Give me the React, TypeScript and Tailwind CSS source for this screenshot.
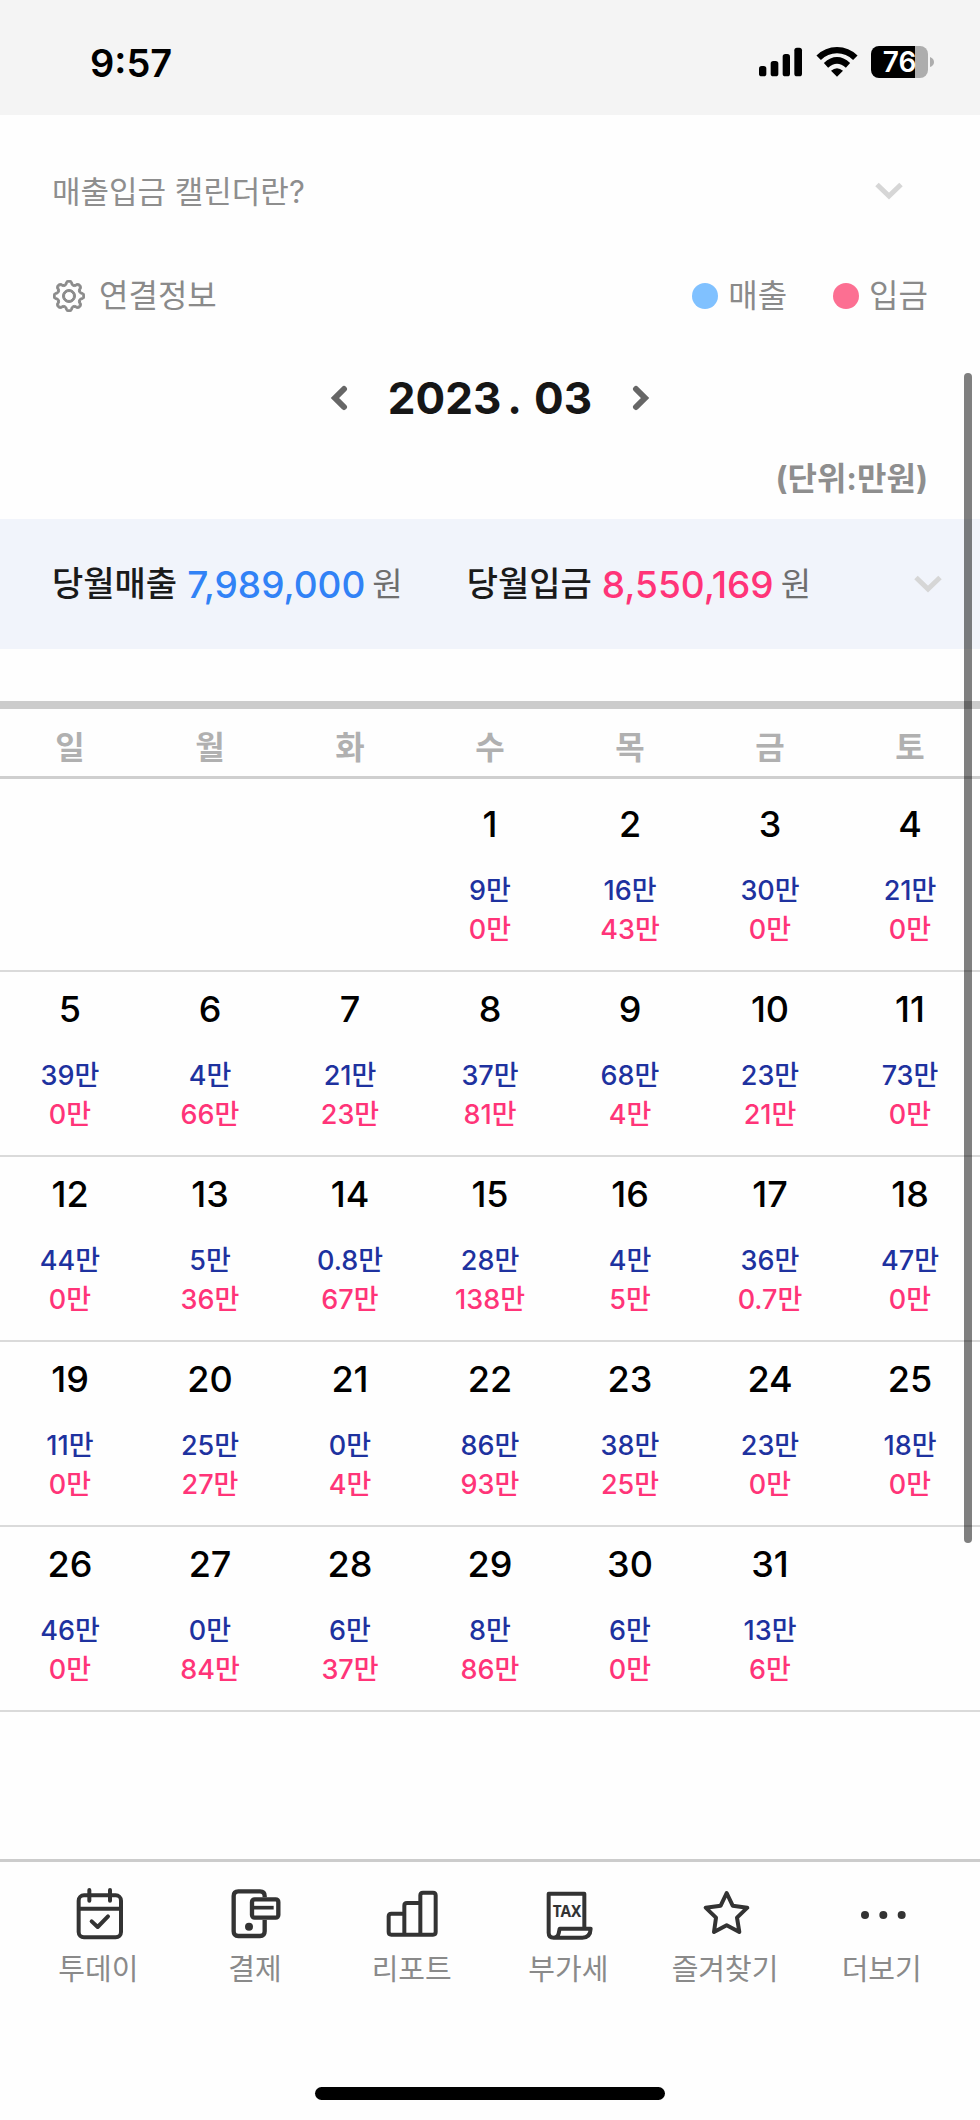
import { BsGear } from "react-icons/bs";

type Amounts = [day: number, sales: string, deposit: string];

const weekdays = ["일", "월", "화", "수", "목", "금", "토"];

const weeks: (Amounts | null)[][] = [
  [null, null, null, [1, "9", "0"], [2, "16", "43"], [3, "30", "0"], [4, "21", "0"]],
  [[5, "39", "0"], [6, "4", "66"], [7, "21", "23"], [8, "37", "81"], [9, "68", "4"], [10, "23", "21"], [11, "73", "0"]],
  [[12, "44", "0"], [13, "5", "36"], [14, "0.8", "67"], [15, "28", "138"], [16, "4", "5"], [17, "36", "0.7"], [18, "47", "0"]],
  [[19, "11", "0"], [20, "25", "27"], [21, "0", "4"], [22, "86", "93"], [23, "38", "25"], [24, "23", "0"], [25, "18", "0"]],
  [[26, "46", "0"], [27, "0", "84"], [28, "6", "37"], [29, "8", "86"], [30, "6", "0"], [31, "13", "6"], null],
];

function ChevronDown() {
  return (
    <svg width="28" height="18" viewBox="0 0 28 18" fill="none" stroke="#d6d6d6" strokeWidth="5" aria-hidden="true">
      <path d="M2 2.500 14 14 26 2.500" />
    </svg>
  );
}

function StatusBar() {
  return (
    <header className="flex h-[115px] items-center justify-between bg-[#f4f4f4] pt-2 pr-[46px] pl-[90px]">
      <time className="pt-[2px] text-[38px] font-semibold leading-none text-black">9:57</time>
      <div className="flex items-center gap-[13px]">
        <svg width="44" height="30" viewBox="809 141 132 90" aria-label="신호 세기" role="img">
          <rect x="809" y="198" width="22" height="31" rx="8" />
          <rect x="844" y="183" width="23" height="46" rx="8" />
          <rect x="880" y="162" width="22" height="67" rx="8" />
          <rect x="915" y="143" width="23" height="86" rx="8" />
        </svg>
        <svg width="42" height="30" viewBox="977 139 126 90" aria-label="와이파이" role="img">
          <path d="M1040 228 1022 210Q1040 195 1058 210Z" />
          <g fill="none" stroke="#000" strokeWidth="19">
            <path d="M985 171.500Q1008 148.500 1040 148.500T1095 171.500" />
            <path d="M1007 194Q1040 164 1073 194" />
          </g>
        </svg>
        <div className="flex items-center gap-[2px]">
          <div className="flex h-8 w-[57px] items-center justify-center rounded-lg bg-linear-to-r from-black from-77% to-[#adadad] to-77% text-[28px] font-semibold leading-none text-white">
            76
          </div>
          <svg width="4" height="10" viewBox="0 0 4 10" fill="#adadad" aria-hidden="true">
            <path d="M0 0Q4 1.500 4 5T0 10Z" />
          </svg>
        </div>
      </div>
    </header>
  );
}

function Total({ label, value, color }: { label: string; value: string; color: string }) {
  return (
    <div className="flex items-center">
      <span className="text-[34px] font-medium text-[#1a1a1a]">{label}</span>
      <span className={`ml-[10px] text-[37px] font-medium ${color}`}>{value}</span>
      <span className="ml-[7px] text-[33px] text-[#6e6e6e]">원</span>
    </div>
  );
}

const tabs = [
  {
    label: "투데이",
    icon: (
      <svg width="52" height="52" viewBox="212 144 156 156" fill="none" stroke="#333" strokeWidth="12" strokeLinecap="round" strokeLinejoin="round">
        <rect x="232" y="166" width="127" height="126" rx="16" />
        <path d="M264 150v32M326 150v32M234 206h124M271 244l18 17 31-32" />
      </svg>
    ),
  },
  {
    label: "결제",
    icon: (
      <svg width="52" height="52" viewBox="685 144 156 156" fill="none" stroke="#333" strokeWidth="13">
        <path d="M792 172v-4q0-14-14-14h-65q-14 0-14 14v106q0 14 14 14h65q14 0 14-14v-34" />
        <rect x="754" y="178" width="79" height="55" rx="8" />
        <path d="M758 203h61" strokeWidth="11" />
        <circle cx="745" cy="260" r="12" fill="#333" stroke="none" />
      </svg>
    ),
  },
  {
    label: "리포트",
    icon: (
      <svg width="52" height="52" viewBox="1157 144 156 156" fill="none" stroke="#333" strokeWidth="12" strokeLinejoin="round">
        <path d="M1212 221h-39q-8 0-8 8v47q0 8 8 8h125q8 0 8-8v-110q0-8-8-8h-30q-8 0-8 8v118M1260 189h-40q-8 0-8 8v87" />
      </svg>
    ),
  },
  {
    label: "부가세",
    icon: (
      <svg width="52" height="52" viewBox="154 144 156 156" fill="none" stroke="#333" strokeWidth="12" strokeLinejoin="round">
        <path d="M281 264V161H174v117q0 15 15 15h86q24 0 25-27h-93l-3 14q-3 13-16 13" />
        <text x="229" y="231" textAnchor="middle" fontFamily="Noto Sans, sans-serif" fontSize="46" fontWeight="700" fill="#333" stroke="none">TAX</text>
      </svg>
    ),
  },
  {
    label: "즐겨찾기",
    icon: (
      <svg width="52" height="52" viewBox="624 144 156 156" fill="none" stroke="#333" strokeWidth="12" strokeLinejoin="round">
        <path d="M707 159 725 197 769 203 738 233 745 276 707 256 669 276 675 233 644 203 689 197Z" />
      </svg>
    ),
  },
  {
    label: "더보기",
    icon: (
      <svg width="52" height="52" viewBox="1095 144 156 156" fill="#333">
        <circle cx="1122" cy="225" r="12" />
        <circle cx="1177" cy="225" r="12" />
        <circle cx="1232" cy="225" r="12" />
      </svg>
    ),
  },
];

export default function App() {
  return (
    <div className="relative flex min-h-screen flex-col bg-[#fefefe] font-['Inter','Noto_Sans_CJK_KR',sans-serif]">
      <StatusBar />

      <main className="flex-1">
        <button type="button" className="mt-12 flex h-14 w-full items-center justify-between pl-[52px] pr-[77px] text-[31px] leading-none text-[#8e8e8e]">
          매출입금 캘린더란?
          <ChevronDown />
        </button>

        <div className="mt-[49px] flex h-14 items-center justify-between pl-[53px] pr-[52px] text-[32px] leading-none text-[#8a8a8a]">
          <button type="button" className="flex items-center gap-[14px]">
            <BsGear className="size-8 stroke-[#8a8a8a] [stroke-width:0.5]" aria-hidden="true" />
            연결정보
          </button>
          <ul className="flex items-center gap-[46px]">
            <li className="flex items-center gap-[10px]">
              <span className="size-[26px] rounded-full bg-[#80c1ff]" />
              매출
            </li>
            <li className="flex items-center gap-[10px]">
              <span className="size-[26px] rounded-full bg-[#fc6f92]" />
              입금
            </li>
          </ul>
        </div>

        <div className="mt-[46px] flex h-14 items-center justify-center gap-10">
          <button type="button" aria-label="이전 달">
            <svg width="18" height="28" viewBox="0 0 18 28" fill="none" stroke="#666" strokeWidth="6" strokeLinecap="round">
              <path d="M14 5 5 14 14 23" />
            </svg>
          </button>
          <h1 className="flex text-[44px] font-bold leading-none text-[#161616]">
            <span>2023</span>
            <span className="mr-3 ml-[6px]">.</span>
            <span>03</span>
          </h1>
          <button type="button" aria-label="다음 달">
            <svg width="18" height="28" viewBox="0 0 18 28" fill="none" stroke="#666" strokeWidth="6" strokeLinecap="round">
              <path d="M4 5 13 14 4 23" />
            </svg>
          </button>
        </div>

        <p className="mt-[29px] flex h-12 items-center justify-end pr-[52px] text-[32px] font-bold leading-none text-[#8e8e8e]">(단위:만원)</p>

        <section className="mt-4 flex h-[130px] items-center justify-between bg-[#f1f4fb] pl-[52px] pr-[38px] leading-none">
          <div className="flex items-center gap-16">
            <Total label="당월매출" value="7,989,000" color="text-[#3182f6]" />
            <Total label="당월입금" value="8,550,169" color="text-[#ff3478]" />
          </div>
          <button type="button" aria-label="합계 펼치기">
            <ChevronDown />
          </button>
        </section>

        <table className="mt-[52px] w-full table-fixed border-collapse border-t-8 border-[#cccccc] text-center">
          <thead>
            <tr className="h-[72px] border-b-3 border-[#cfcfcf] text-[32px] leading-none text-[#b0b0b0]">
              {weekdays.map((name) => (
                <th key={name} scope="col" className="p-0 pt-3 font-bold">{name}</th>
              ))}
            </tr>
          </thead>
          <tbody>
            {weeks.map((week, row) => (
              <tr key={row} className="h-[185px] border-b-2 border-[#dadada] first:h-[194px]">
                {week.map((cell, col) => (
                  <td key={col} className="p-0 pb-[21px] align-bottom font-medium">
                    {cell && (
                      <>
                        <div className="mb-6 text-[36px] leading-[46px] text-black">{cell[0]}</div>
                        <div className="text-[27px] leading-[39px] text-[#1e329f]">{cell[1]}만</div>
                        <div className="text-[27px] leading-[39px] text-[#ff3478]">{cell[2]}만</div>
                      </>
                    )}
                  </td>
                ))}
              </tr>
            ))}
          </tbody>
        </table>
      </main>

      <nav className="h-[261px] border-t-3 border-[#cccccc]">
        <ul className="grid grid-cols-6 px-5 pt-[26px]">
          {tabs.map((tab) => (
            <li key={tab.label}>
              <a href="#" className="flex flex-col items-center gap-[10px] text-[29px] leading-[40px] text-[#8a8a8a]">
                {tab.icon}
                {tab.label}
              </a>
            </li>
          ))}
        </ul>
      </nav>

      <div className="absolute bottom-5 left-1/2 h-[13px] w-[350px] -translate-x-1/2 rounded-full bg-black" />
      <div className="absolute right-2 top-[373px] h-[1170px] w-2 rounded-full bg-black/50" />
    </div>
  );
}
